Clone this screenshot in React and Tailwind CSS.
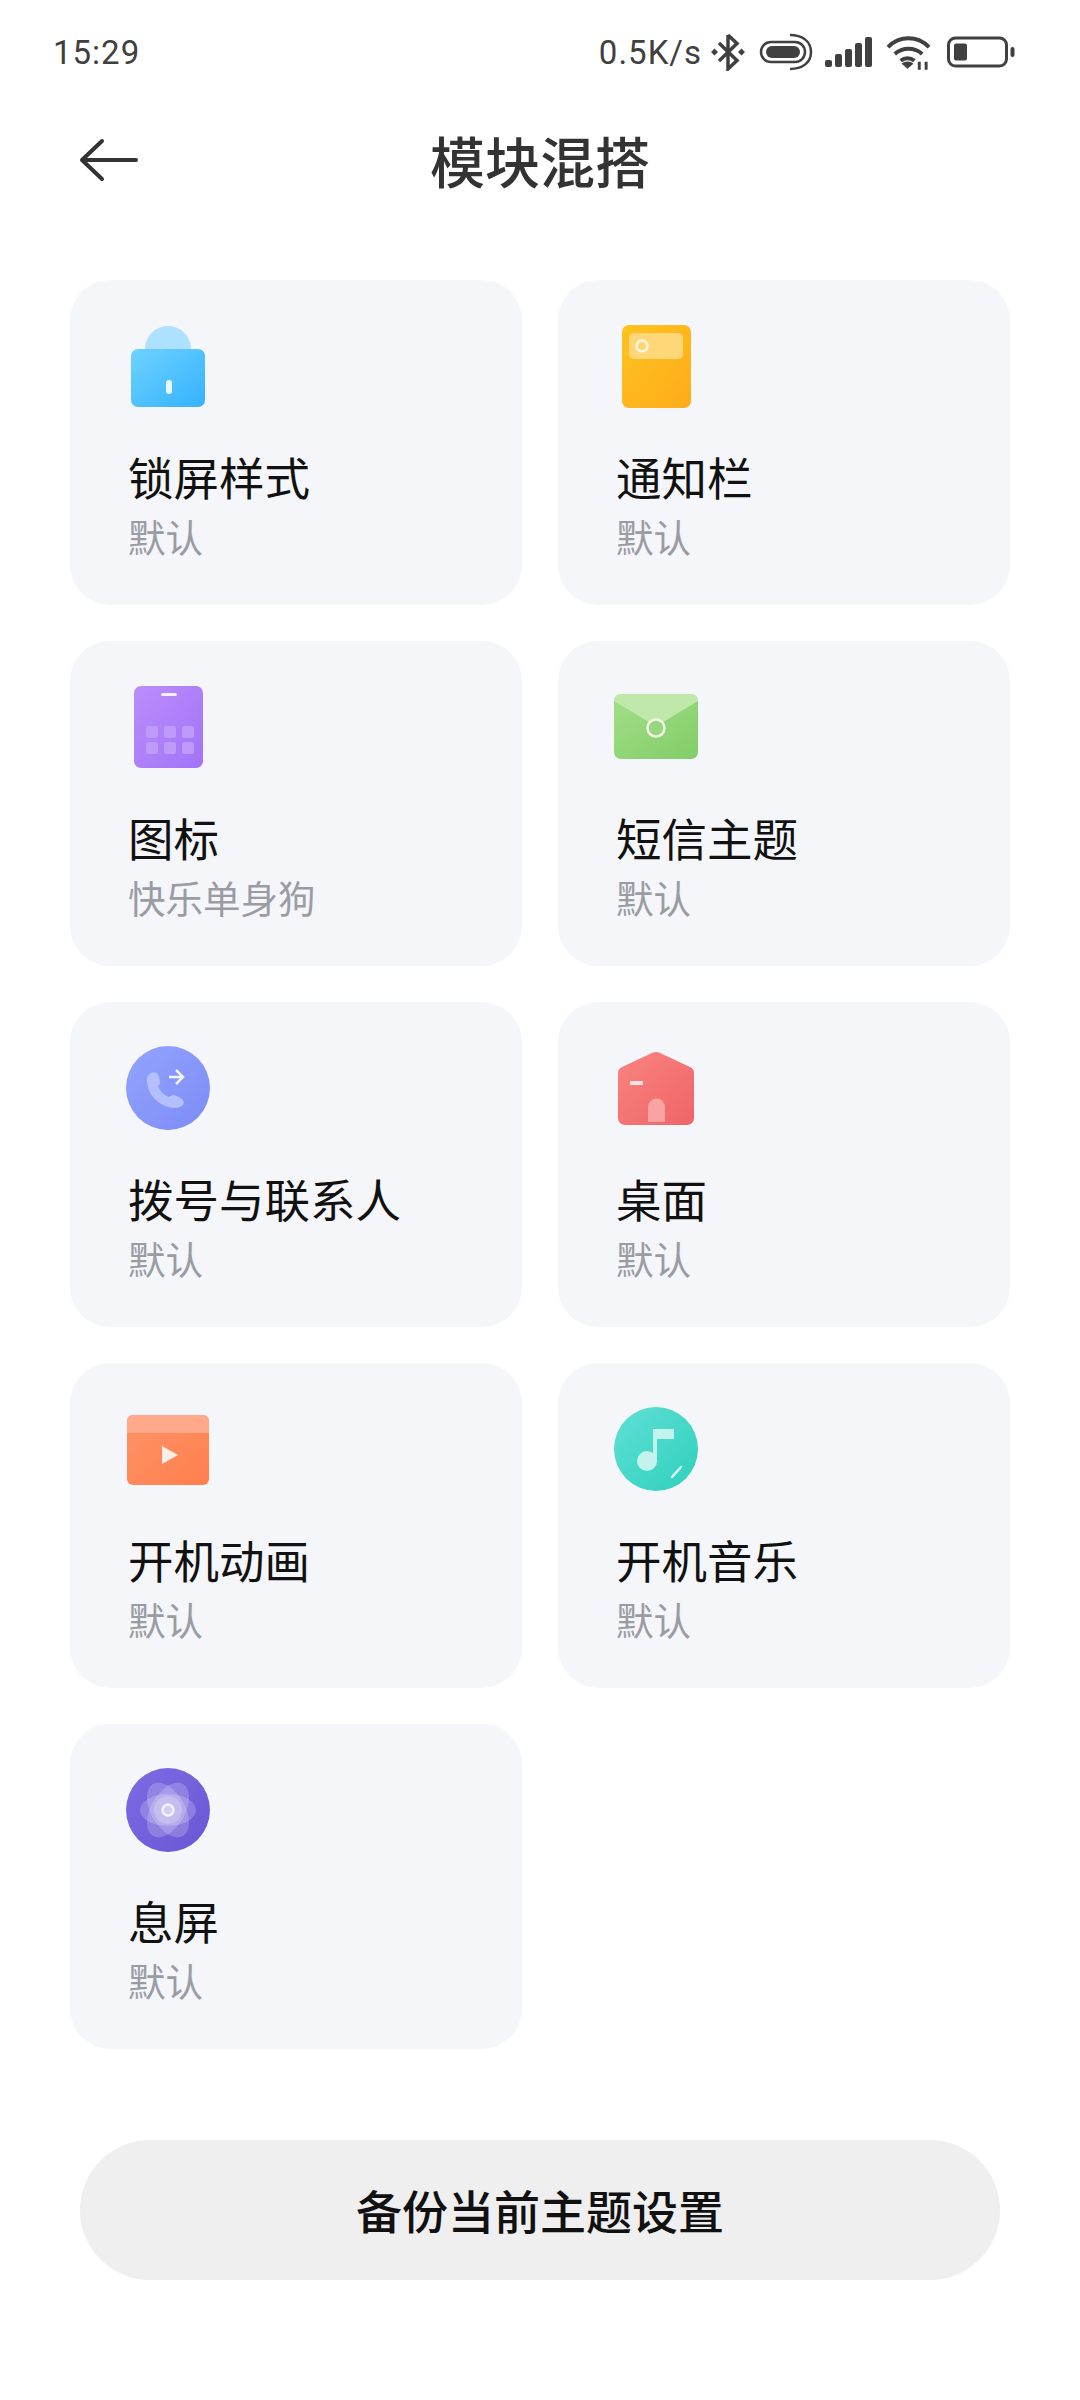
import React from 'react'

const cjk = { fontFamily: '"Noto Sans CJK SC", sans-serif' }

const LockIcon = () => (
  <svg width="84" height="84" viewBox="0 0 84 84">
    <defs>
      <linearGradient id="lockg" x1="0" y1="0" x2="1" y2="1">
        <stop offset="0" stopColor="#6fd2ff" />
        <stop offset="1" stopColor="#34b2ff" />
      </linearGradient>
    </defs>
    <path d="M19 26a23 23 0 0 1 46 0v6H19z" fill="#aee0ff" />
    <rect x="5" y="26" width="74" height="58" rx="7" fill="url(#lockg)" />
    <rect x="40" y="57" width="6" height="14" rx="3" fill="#eaf8ff" />
  </svg>
)

const NotifyIcon = () => (
  <svg width="84" height="84" viewBox="0 0 84 84">
    <defs>
      <linearGradient id="notg" x1="0" y1="0" x2="1" y2="1">
        <stop offset="0" stopColor="#ffc31f" />
        <stop offset="1" stopColor="#ffab1a" />
      </linearGradient>
    </defs>
    <rect x="8" y="1" width="69" height="83" rx="7" fill="url(#notg)" />
    <rect x="15" y="9" width="54" height="26" rx="5" fill="#ffd778" />
    <circle cx="28" cy="22" r="5.5" fill="none" stroke="#fff6df" strokeWidth="2.5" />
  </svg>
)

const GridIcon = () => (
  <svg width="84" height="84" viewBox="0 0 84 84">
    <defs>
      <linearGradient id="gridg" x1="0" y1="0" x2="1" y2="1">
        <stop offset="0" stopColor="#bb8dfb" />
        <stop offset="1" stopColor="#a273f7" />
      </linearGradient>
    </defs>
    <rect x="8" y="2" width="69" height="82" rx="7" fill="url(#gridg)" />
    <rect x="35" y="9" width="16" height="3" rx="1.5" fill="#f6efff" />
    {[20, 38, 56].map((x) =>
      [42, 58].map((y) => <rect key={x + '-' + y} x={x} y={y} width="12" height="12" rx="2.5" fill="#c09afb" />)
    )}
  </svg>
)

const MailIcon = () => (
  <svg width="84" height="84" viewBox="0 0 84 84">
    <defs>
      <linearGradient id="mailg" x1="0" y1="0" x2="1" y2="1">
        <stop offset="0" stopColor="#a3df87" />
        <stop offset="1" stopColor="#81cd68" />
      </linearGradient>
    </defs>
    <rect x="0" y="10" width="84" height="65" rx="7" fill="url(#mailg)" />
    <path d="M0 17a7 7 0 0 1 7-7h70a7 7 0 0 1 7 7L46 40a8 8 0 0 1-8 0L0 17z" fill="#c0e8ab" />
    <circle cx="42" cy="44" r="8.5" fill="#98d67f" stroke="#f0faea" strokeWidth="2.5" />
  </svg>
)

const PhoneIcon = () => (
  <svg width="84" height="84" viewBox="0 0 84 84">
    <defs>
      <linearGradient id="phoneg" x1="0" y1="0" x2="1" y2="1">
        <stop offset="0" stopColor="#94a4fe" />
        <stop offset="1" stopColor="#7b8bf5" />
      </linearGradient>
    </defs>
    <circle cx="42" cy="42" r="42" fill="url(#phoneg)" />
    <path d="M25 27c4-2 7 0 8 4l1 5c0 2-1 3-2 4 2 5 6 9 11 11 1-1 3-2 5-2l5 2c4 2 6 5 4 8-3 3-9 4-15 2-12-4-20-13-21-25-1-4 1-7 4-9z" fill="#b4bfff" />
    <path d="M43 31h13M50 24l7 7-7 7" fill="none" stroke="#f2f4ff" strokeWidth="2.5" />
  </svg>
)

const HomeIcon = () => (
  <svg width="84" height="84" viewBox="0 0 84 84">
    <defs>
      <linearGradient id="homeg" x1="0" y1="0" x2="1" y2="1">
        <stop offset="0" stopColor="#f98480" />
        <stop offset="1" stopColor="#ef6468" />
      </linearGradient>
    </defs>
    <path d="M38 8a9 9 0 0 1 8 0l30 14a7 7 0 0 1 4 7V73a7 7 0 0 1-7 7H11a7 7 0 0 1-7-7V29a7 7 0 0 1 4-7z" fill="url(#homeg)" />
    <rect x="16" y="36" width="13" height="4" fill="#fde4e2" />
    <path d="M34 77V62a8.5 8.5 0 0 1 17 0v15z" fill="#f9a3a3" />
  </svg>
)

const VideoIcon = () => (
  <svg width="84" height="84" viewBox="0 0 84 84">
    <defs>
      <linearGradient id="videog" x1="0" y1="0" x2="1" y2="1">
        <stop offset="0" stopColor="#ff9368" />
        <stop offset="1" stopColor="#ff7f4d" />
      </linearGradient>
    </defs>
    <rect x="1" y="8" width="82" height="70" rx="6" fill="url(#videog)" />
    <path d="M1 14a6 6 0 0 1 6-6h70a6 6 0 0 1 6 6v12H1z" fill="#ffa98a" />
    <path d="M36 39l16 9-16 9z" fill="#ffeee7" />
  </svg>
)

const MusicIcon = () => (
  <svg width="84" height="86" viewBox="0 0 84 86">
    <defs>
      <linearGradient id="musicg" x1="0" y1="0" x2="1" y2="1">
        <stop offset="0" stopColor="#5fe0d5" />
        <stop offset="1" stopColor="#2fd0bd" />
      </linearGradient>
    </defs>
    <circle cx="42" cy="43" r="42" fill="url(#musicg)" />
    <circle cx="33" cy="55" r="10" fill="#c4f3ee" />
    <path d="M39 55V23h21v10H43v22z" fill="#c4f3ee" />
    <path d="M58 71l9-10" stroke="#d8f8f4" strokeWidth="2.5" strokeLinecap="round" />
  </svg>
)

const FlowerIcon = () => (
  <svg width="84" height="86" viewBox="0 0 84 86">
    <defs>
      <linearGradient id="flowerg" x1="0" y1="0" x2="1" y2="1">
        <stop offset="0" stopColor="#7d6be6" />
        <stop offset="1" stopColor="#6a56d2" />
      </linearGradient>
    </defs>
    <circle cx="42" cy="42" r="42" fill="url(#flowerg)" />
    <g fill="#ffffff" fillOpacity="0.2">
      <ellipse cx="42" cy="42" rx="28" ry="16" />
      <ellipse cx="42" cy="42" rx="30" ry="17" transform="rotate(60 42 42)" />
      <ellipse cx="42" cy="42" rx="30" ry="17" transform="rotate(120 42 42)" />
      <circle cx="42" cy="42" r="14" />
    </g>
    <circle cx="42" cy="42" r="5.5" fill="#ffffff" fillOpacity="0.25" stroke="#f4f1ff" strokeWidth="2.5" />
  </svg>
)

const cards = [
  { title: '锁屏样式', sub: '默认', Icon: LockIcon },
  { title: '通知栏', sub: '默认', Icon: NotifyIcon, nudge: true },
  { title: '图标', sub: '快乐单身狗', Icon: GridIcon },
  { title: '短信主题', sub: '默认', Icon: MailIcon },
  { title: '拨号与联系人', sub: '默认', Icon: PhoneIcon, nudge: true },
  { title: '桌面', sub: '默认', Icon: HomeIcon },
  { title: '开机动画', sub: '默认', Icon: VideoIcon, nudge: true },
  { title: '开机音乐', sub: '默认', Icon: MusicIcon },
  { title: '息屏', sub: '默认', Icon: FlowerIcon, nudge: true },
]

const StatusIcons = () => (
  <div className="flex items-center">
    {/* bluetooth */}
    <svg width="36" height="38" viewBox="0 0 36 38" className="ml-[8px]">
      <path d="M18 2v34l9-8.5L9 10M18 2l9 8.5L9 28" fill="none" stroke="#404040" strokeWidth="3.5" />
      <path d="M4.500 15.500L8 19l-3.500 3.500L1 19zM31.500 15.500L35 19l-3.500 3.500L28 19z" fill="#404040" />
    </svg>
    {/* link/hotspot */}
    <svg width="54" height="38" viewBox="0 0 54 38" className="ml-[13px]">
      <rect x="2" y="9" width="44" height="20" rx="10" fill="none" stroke="#404040" strokeWidth="2.5" />
      <rect x="7" y="13" width="34" height="12" rx="6" fill="#404040" />
      <path d="M31 2c12 0 21 6 21 17s-9 17-21 17" fill="none" stroke="#404040" strokeWidth="2.5" />
    </svg>
    {/* signal */}
    <svg width="48" height="32" viewBox="0 0 48 32" className="ml-[12px]">
      <rect x="0" y="24" width="7" height="7" rx="2" fill="#404040" />
      <rect x="10" y="18" width="7" height="13" rx="2" fill="#404040" />
      <rect x="20" y="13" width="7" height="18" rx="2" fill="#404040" />
      <rect x="30" y="7" width="7" height="24" rx="2" fill="#404040" />
      <rect x="40" y="1" width="7" height="30" rx="2" fill="#404040" />
    </svg>
    {/* wifi */}
    <svg width="47" height="36" viewBox="0 0 48 36" className="ml-[12px]">
      <path d="M3 13c12-12 30-12 42 0M10 20c8-7 20-7 28 0M16 27c4-3.5 10-3.5 14 0" fill="none" stroke="#404040" strokeWidth="4" />
      <path d="M23 35l-6-5c3-3 9-3 12 0z" fill="#404040" />
      <path d="M35 36v-8M42 36v-8" stroke="#404040" strokeWidth="3" />
    </svg>
    {/* battery */}
    <svg width="68" height="32" viewBox="0 0 68 32" className="ml-[15px]">
      <rect x="1.5" y="2" width="58" height="28" rx="7" fill="none" stroke="#404040" strokeWidth="3" />
      <rect x="7" y="7.5" width="13" height="17" rx="2" fill="#404040" />
      <rect x="63.5" y="11" width="4" height="10" rx="2" fill="#404040" />
    </svg>
  </div>
)

export default function App() {
  return (
    <div className="w-[1080px] h-[2400px] bg-white flex flex-col" style={cjk}>
      <div className="h-[104px] pl-[53px] pr-[65px] flex items-center justify-between shrink-0">
        <span className="text-[33px] leading-none text-[#404040] tracking-[1px]" style={{ fontFamily: 'Roboto, sans-serif' }}>15:29</span>
        <div className="flex items-center">
          <span className="text-[33px] leading-none text-[#404040] tracking-[1px]" style={{ fontFamily: 'Roboto, sans-serif' }}>0.5K/s</span>
          <StatusIcons />
        </div>
      </div>

      <div className="relative h-[112px] flex items-center justify-center shrink-0">
        <svg width="60" height="44" viewBox="0 0 60 44" className="absolute left-[79px] top-[34px]">
          <path d="M57 22H4M23 3L3 22l20 19" fill="none" stroke="#333333" strokeWidth="4" strokeLinecap="round" strokeLinejoin="round" />
        </svg>
        <h1 className="text-[55px] leading-none font-medium text-[#333333] -mt-[2px]">模块混搭</h1>
      </div>

      <div className="grid grid-cols-2 gap-x-[36px] gap-y-[36px] px-[70px] mt-[64px]">
        {cards.map(({ title, sub, Icon, nudge }) => (
          <div key={title} className="h-[325px] rounded-[40px] bg-[#f5f6fa] pl-[56px] pt-[43px]">
            <div className={nudge ? 'h-[84px] pt-px' : 'h-[84px]'}>
              <Icon />
            </div>
            <div className="ml-[2px] mt-[41px] text-[45.5px] leading-[56px] text-[#111111]">{title}</div>
            <div className="ml-[2px] mt-[5px] text-[37.5px] leading-[54px] text-[#9a9ca3]">{sub}</div>
          </div>
        ))}
      </div>

      <div className="mt-[91px] px-[80px]">
        <button className="w-full h-[140px] rounded-[70px] bg-[#efefef] pb-[2px] text-[46px] font-medium text-[#111111]">备份当前主题设置</button>
      </div>
    </div>
  )
}
